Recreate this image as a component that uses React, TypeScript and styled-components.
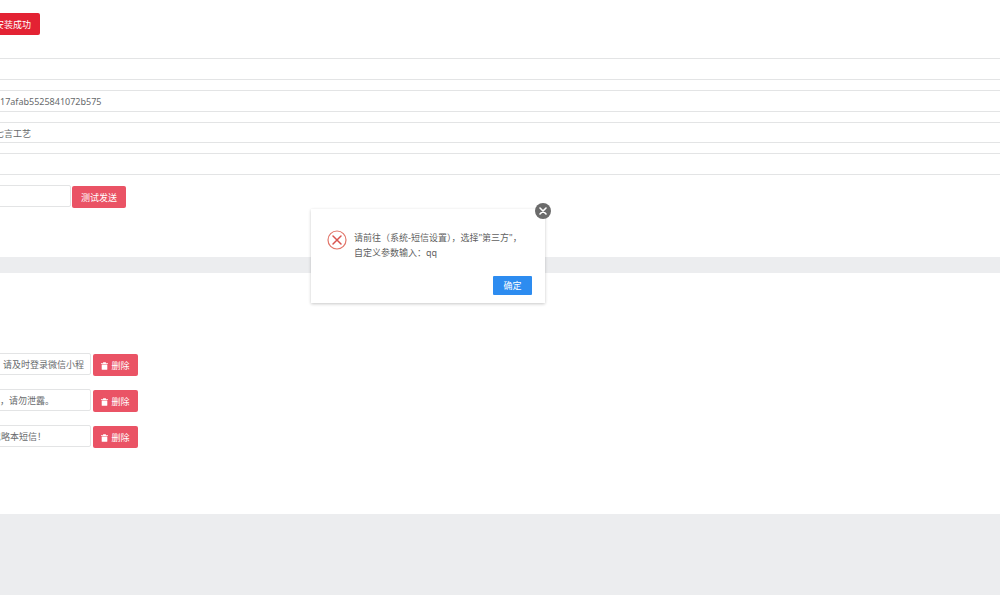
import React from 'react';
import styled, { createGlobalStyle } from 'styled-components';

const GlobalStyle = createGlobalStyle`
  html, body {
    margin: 0;
    padding: 0;
    height: 100%;
    overflow: hidden;
    background: #ecedef;
    font-family: "Noto Sans", "Noto Sans CJK SC", sans-serif;
    color: #676a6c;
  }
`;

const Page = styled.div`
  width: 1000px;
  height: 595px;
  overflow: hidden;
  position: relative;
  background: #ecedef;
`;

const Panel = styled.section<{ $height: number; $pad: number; $gap?: number }>`
  height: ${(p) => p.$height}px;
  padding-top: ${(p) => p.$pad}px;
  margin-top: ${(p) => p.$gap ?? 0}px;
  box-sizing: border-box;
  background: #fff;
`;

const SuccessButton = styled.div`
  width: 51px;
  height: 22px;
  margin-left: -20px;
  padding-right: 9px;
  background: #e32233;
  border-radius: 2px;
  color: #fff;
  font-size: 9px;
  line-height: 24px;
  text-align: right;
`;

const Fields = styled.div`
  margin: 23px -20px 0;
  display: flex;
  flex-direction: column;
  gap: 10px;
`;

const Field = styled.div<{ $indent?: number; $height?: number }>`
  height: ${(p) => p.$height ?? 22}px;
  box-sizing: border-box;
  border: 1px solid #e3e4e5;
  font-size: 9px;
  line-height: 21px;
  padding-left: ${(p) => p.$indent ?? 19}px;
  color: #676a6c;
  white-space: nowrap;
`;

const TestRow = styled.div`
  display: flex;
  align-items: flex-start;
  gap: 1px;
  margin-top: 10px;
  margin-left: -20px;
`;

const TestInput = styled.div`
  width: 91px;
  height: 22px;
  box-sizing: border-box;
  border: 1px solid #e3e4e5;
  border-radius: 2px;
`;

const DangerButton = styled.div<{ $width: number }>`
  width: ${(p) => p.$width}px;
  height: 22px;
  margin-top: 1px;
  padding-top: 1px;
  box-sizing: border-box;
  background: #ea5365;
  border-radius: 2px;
  color: #fff;
  font-size: 9px;
  display: flex;
  align-items: center;
  justify-content: center;
  gap: 3px;
`;

const Rows = styled.div`
  display: flex;
  flex-direction: column;
  gap: 13px;
`;

const MsgRow = styled.div`
  display: flex;
  align-items: flex-start;
  gap: 2px;
  margin-left: -20px;
`;

const MsgInput = styled.div<{ $indent: number }>`
  width: 111px;
  height: 22px;
  box-sizing: border-box;
  border: 1px solid #e3e4e5;
  border-radius: 2px;
  font-size: 9px;
  line-height: 22px;
  color: #676a6c;
  overflow: hidden;
  white-space: nowrap;
  padding-left: ${(p) => p.$indent}px;
`;

const Dialog = styled.div`
  position: absolute;
  left: 311px;
  top: 209px;
  width: 234px;
  height: 94px;
  box-sizing: border-box;
  background: #fff;
  box-shadow: 0 1px 3px rgba(0, 0, 0, 0.22);
  padding: 21px 13px 0 16px;
  display: flex;
  flex-direction: column;
`;

const CloseButton = styled.div`
  position: absolute;
  right: -6px;
  top: -6px;
  width: 16px;
  height: 16px;
  border-radius: 50%;
  background: #6b6b6b;
  display: flex;
  align-items: center;
  justify-content: center;
`;

const DialogBody = styled.div`
  display: flex;
  gap: 7px;
`;

const DialogText = styled.div`
  font-size: 9px;
  line-height: 15px;
  color: #5f5f5f;
  white-space: nowrap;
`;

const DialogFooter = styled.div`
  margin-top: auto;
  margin-bottom: 8px;
  display: flex;
  justify-content: flex-end;
`;

const ConfirmButton = styled.div`
  width: 39px;
  height: 19px;
  background: #2d8cf0;
  border-radius: 1px;
  color: #fff;
  font-size: 9px;
  line-height: 20px;
  text-align: center;
`;

function Trash() {
  return (
    <svg width="7" height="8" viewBox="0 0 7 8">
      <path d="M0 1.2h2.1V0.3h2.8v0.9H7v0.9H0zM0.7 2.6h5.6v4.6q0 0.6-0.6 0.6H1.3q-0.6 0-0.6-0.6z" fill="#fff" />
    </svg>
  );
}

export default function App() {
  return (
    <Page>
      <GlobalStyle />
      <Panel $height={257} $pad={13}>
        <SuccessButton>安装成功</SuccessButton>
        <Fields>
          <Field />
          <Field>17afab5525841072b575</Field>
          <Field $indent={14} $height={21}>七言工艺</Field>
          <Field />
        </Fields>
        <TestRow>
          <TestInput />
          <DangerButton $width={54}>测试发送</DangerButton>
        </TestRow>
      </Panel>
      <Panel $height={241} $pad={80} $gap={16}>
        <Rows>
          <MsgRow>
            <MsgInput $indent={22}>请及时登录微信小程</MsgInput>
            <DangerButton $width={45}><Trash />删除</DangerButton>
          </MsgRow>
          <MsgRow>
            <MsgInput $indent={10}>年，请勿泄露。</MsgInput>
            <DangerButton $width={45}><Trash />删除</DangerButton>
          </MsgRow>
          <MsgRow>
            <MsgInput $indent={11}>忽略本短信！</MsgInput>
            <DangerButton $width={45}><Trash />删除</DangerButton>
          </MsgRow>
        </Rows>
      </Panel>
      <Dialog>
        <CloseButton>
          <svg width="8" height="8" viewBox="0 0 8 8">
            <path d="M1 1l6 6M7 1l-6 6" stroke="#fff" strokeWidth="1.6" strokeLinecap="round" />
          </svg>
        </CloseButton>
        <DialogBody>
          <svg width="20" height="20" viewBox="0 0 20 20" style={{ flex: 'none' }}>
            <circle cx="10" cy="10" r="9" fill="none" stroke="#e2766a" strokeWidth="1.2" />
            <path d="M6 6l8 8M14 6l-8 8" stroke="#d9534f" strokeWidth="1.5" strokeLinecap="round" />
          </svg>
          <DialogText>
            请前往（系统-短信设置），选择"第三方"，
            <br />
            自定义参数输入：qq
          </DialogText>
        </DialogBody>
        <DialogFooter>
          <ConfirmButton>确定</ConfirmButton>
        </DialogFooter>
      </Dialog>
    </Page>
  );
}
